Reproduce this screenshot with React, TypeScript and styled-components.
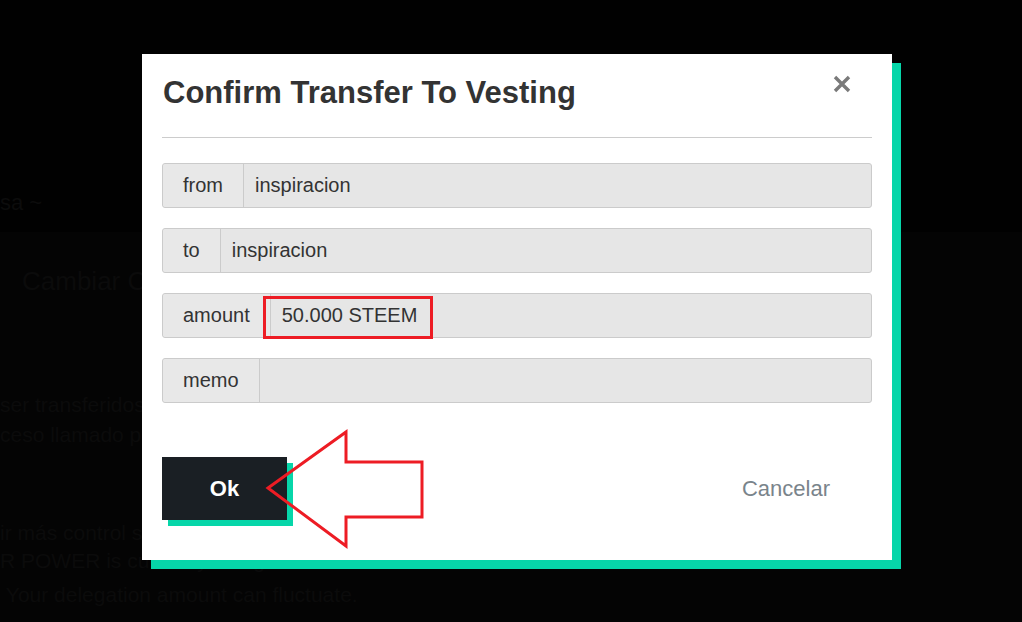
import React from 'react';
import styled, { createGlobalStyle } from 'styled-components';

const Global = createGlobalStyle`
  html, body { margin: 0; padding: 0; background: #040404; }
  body { font-family: "Liberation Sans", Arial, sans-serif; overflow: hidden; }
  * { box-sizing: border-box; }
`;

const Page = styled.div`
  position: relative;
  width: 1022px;
  height: 622px;
  overflow: hidden;
  background: #040404;
`;

const Header = styled.header`
  height: 232px;
  background: #010101;
  display: flex;
  flex-direction: column;
  justify-content: flex-end;
  padding-bottom: 16px;
`;

const NavText = styled.div`
  color: #0c0c0c;
  font-size: 22px;
`;

const Content = styled.main`
  padding-top: 34px;
  color: #0b0b0b;
`;

const SectionTitle = styled.h2`
  margin: 0 0 0 22px;
  font-size: 26px;
  font-weight: normal;
  line-height: 30px;
`;

const Para = styled.p<{ $top: number }>`
  margin: ${(p) => p.$top}px 0 0 0;
  font-size: 21px;
  line-height: 28px;
  white-space: nowrap;
`;

const Modal = styled.div`
  position: absolute;
  top: 54px;
  left: 142px;
  width: 750px;
  background: #fff;
  padding: 21px 20px 40px 20px;
  box-shadow: 9px 9px 0 #06d6a9;
`;

const Title = styled.h3`
  margin: 0 0 0 1px;
  font-size: 31px;
  line-height: 36px;
  font-weight: bold;
  color: #333;
`;

const CloseButton = styled.button`
  position: absolute;
  top: 21px;
  right: 41px;
  width: 18px;
  height: 18px;
  padding: 0;
  border: none;
  background: none;
  display: flex;
  cursor: pointer;
`;

const Divider = styled.hr`
  margin: 26px 0 0 0;
  border: none;
  border-top: 1px solid #cccccc;
`;

const Fields = styled.div`
  margin-top: 25px;
  display: flex;
  flex-direction: column;
  gap: 20px;
`;

const InputGroup = styled.div`
  position: relative;
  display: flex;
  height: 45px;
  border: 1px solid #cbcbcb;
  border-radius: 3px;
  background: #e6e6e6;
  font-size: 20px;
  color: #333;
`;

const Label = styled.span`
  display: flex;
  align-items: center;
  padding: 0 20px;
  background: #e8e8e8;
  border-right: 1px solid #cbcbcb;
  border-radius: 3px 0 0 3px;
`;

const Value = styled.span`
  display: flex;
  align-items: center;
  padding: 0 11px;
  flex: 1;
`;

const Highlight = styled.div`
  position: absolute;
  left: 100px;
  top: 2px;
  width: 170px;
  height: 43px;
  border: 3px solid #ed1c24;
`;

const Footer = styled.div`
  position: relative;
  margin-top: 54px;
  display: flex;
  justify-content: space-between;
  align-items: center;
`;

const OkButton = styled.button`
  width: 125px;
  height: 63px;
  border: none;
  background: #1a1f24;
  color: #fff;
  font-family: "Liberation Sans", Arial, sans-serif;
  font-weight: bold;
  font-size: 22px;
  box-shadow: 6px 6px 0 #06d6a9;
  cursor: pointer;
`;

const CancelButton = styled.button`
  margin-right: 42px;
  border: none;
  background: none;
  padding: 0;
  color: #7a848b;
  font-family: "Liberation Sans", Arial, sans-serif;
  font-size: 22px;
  cursor: pointer;
`;

const Arrow = styled.svg`
  position: absolute;
  left: 104px;
  top: -27px;
  overflow: visible;
`;

const rows = [
  { label: 'from', value: 'inspiracion' },
  { label: 'to', value: 'inspiracion' },
  { label: 'amount', value: '50.000 STEEM', mark: true },
  { label: 'memo', value: '' },
];

export default function App() {
  return (
    <Page>
      <Global />
      <Header>
        <NavText>sa ~</NavText>
      </Header>
      <Content>
        <SectionTitle>Cambiar Contraseña</SectionTitle>
        <Para $top={95}>ser transferidos a cualquier momento</Para>
        <Para $top={2}>ceso llamado power down</Para>
        <Para $top={70}>ir más control sobre tu cuenta</Para>
        <Para $top={0}>R POWER is currently delegated to others</Para>
        <Para $top={6}>&nbsp;Your delegation amount can fluctuate.</Para>
      </Content>

      <Modal>
        <Title>Confirm Transfer To Vesting</Title>
        <CloseButton aria-label="close">
          <svg width="18" height="18" viewBox="0 0 18 18">
            <path d="M2 2 L16 16 M16 2 L2 16" stroke="#7a7a7a" strokeWidth="3.4" strokeLinecap="butt" />
          </svg>
        </CloseButton>
        <Divider />
        <Fields>
          {rows.map((r) => (
            <InputGroup key={r.label}>
              <Label>{r.label}</Label>
              <Value>{r.value}</Value>
              {r.mark && <Highlight />}
            </InputGroup>
          ))}
        </Fields>
        <Footer>
          <OkButton>Ok</OkButton>
          <CancelButton>Cancelar</CancelButton>
          <Arrow width="160" height="120" viewBox="0 0 160 120">
            <polygon
              points="2,58 80,2 80,32 156,32 156,87 80,87 80,116"
              fill="none"
              stroke="#ed1c24"
              strokeWidth="3"
              strokeLinejoin="miter"
            />
          </Arrow>
        </Footer>
      </Modal>
    </Page>
  );
}
